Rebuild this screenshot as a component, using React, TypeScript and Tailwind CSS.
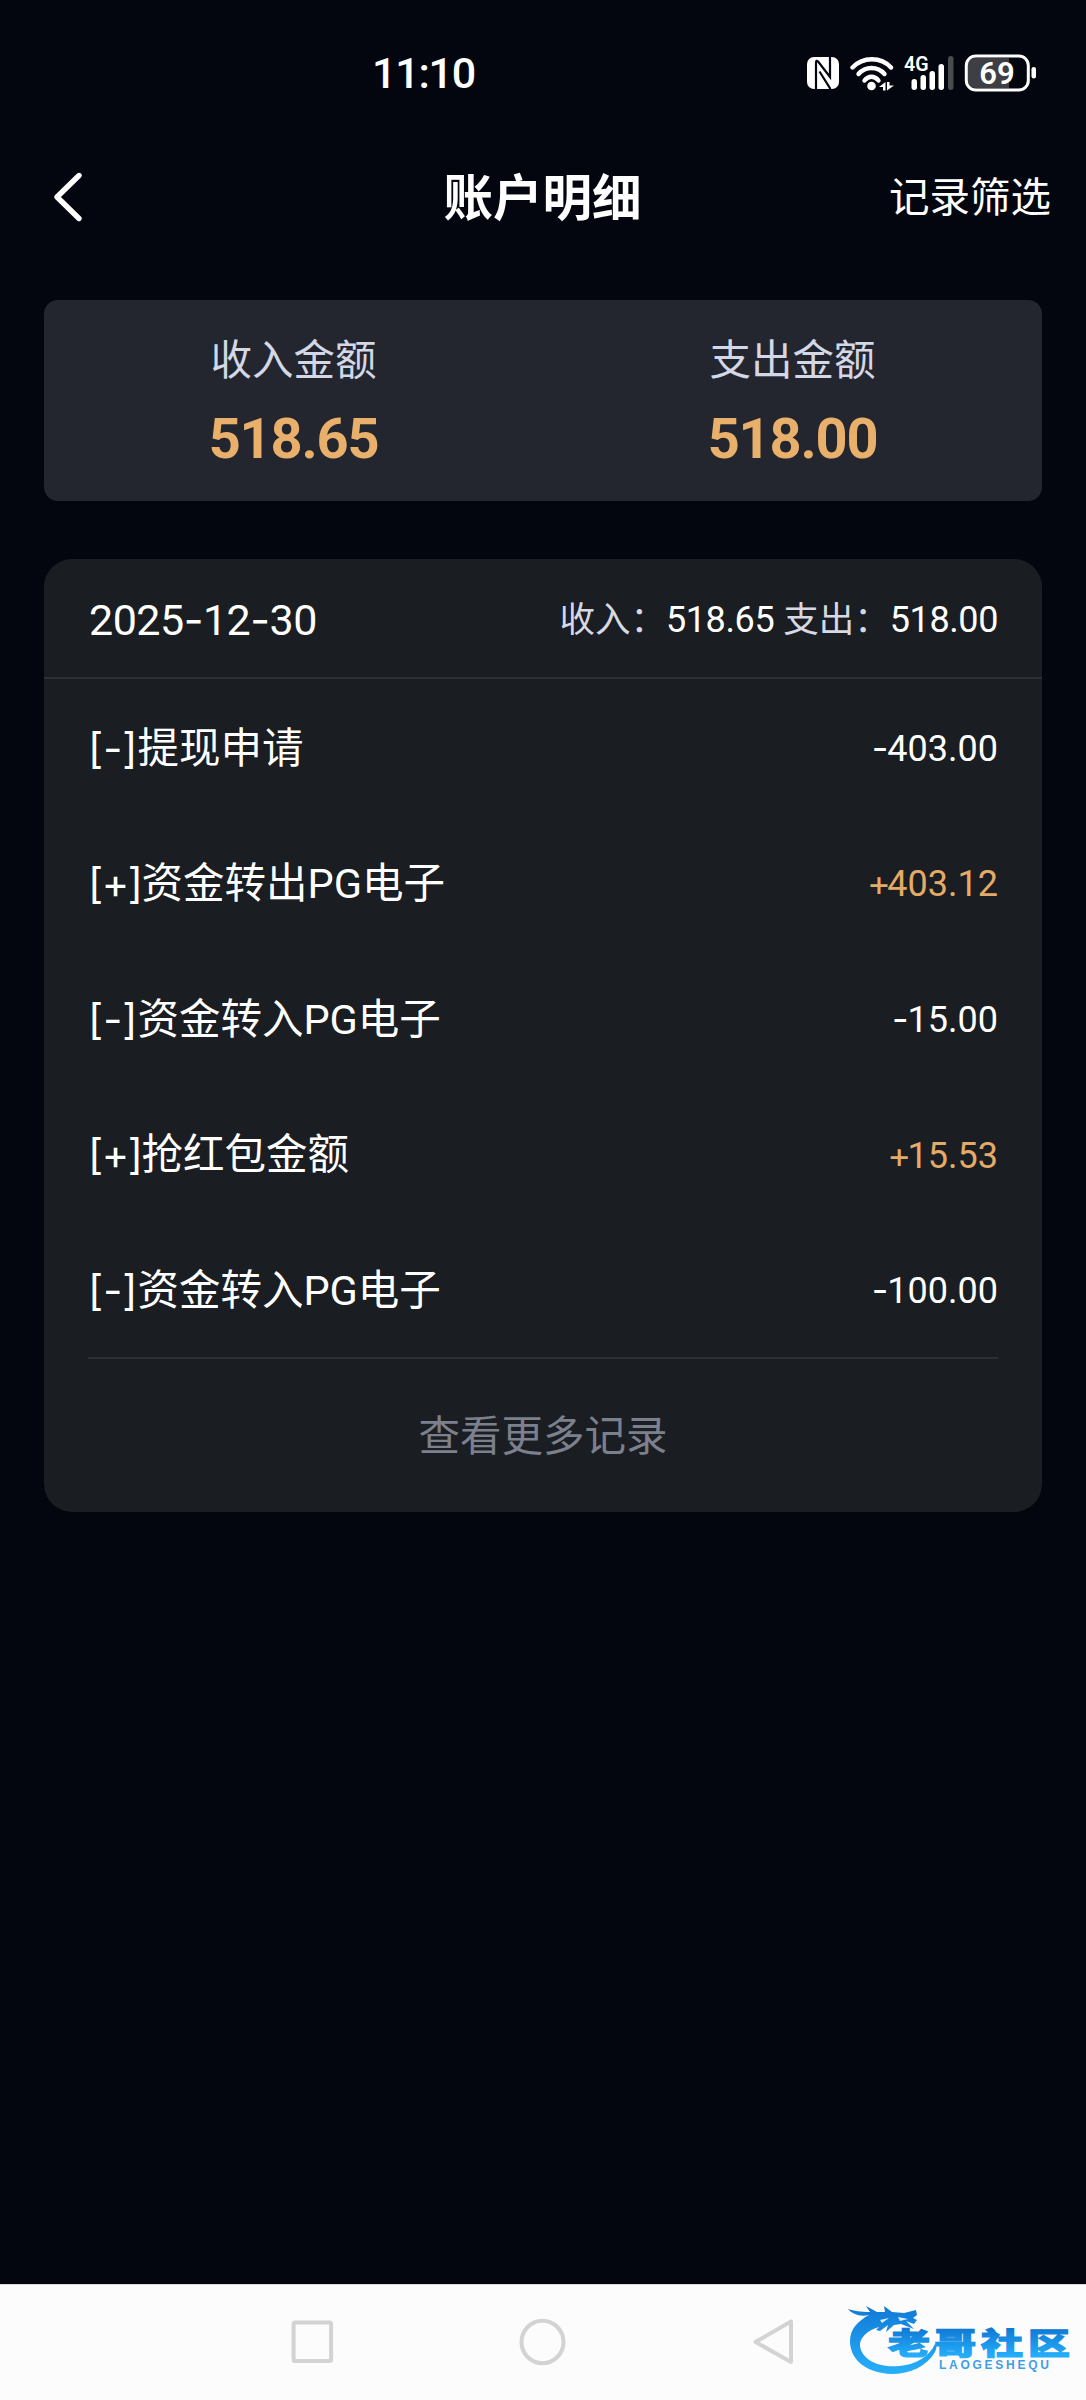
import React from "react";

interface RecordItem {
  sign: "-" | "+";
  title: string;
  amount: string;
}

const RECORDS: RecordItem[] = [
  { sign: "-", title: "提现申请", amount: "403.00" },
  { sign: "+", title: "资金转出PG电子", amount: "403.12" },
  { sign: "-", title: "资金转入PG电子", amount: "15.00" },
  { sign: "+", title: "抢红包金额", amount: "15.53" },
  { sign: "-", title: "资金转入PG电子", amount: "100.00" },
];

export default function App() {
  return (
    <div className="flex h-[2400px] w-[1086px] flex-col overflow-hidden bg-[#03060e] font-['Inter','Noto_Sans_CJK_SC',sans-serif] text-white">
      <StatusBar />

      <header className="grid h-[102px] grid-cols-3 items-center pr-[35px] pl-[52px]">
        <button className="justify-self-start">
          <svg width="32" height="52" viewBox="0 0 32 52" fill="none" stroke="#fff" strokeWidth="5.4" strokeLinecap="round" strokeLinejoin="round">
            <path d="M27 4.500 5 26l22 21.500" />
          </svg>
        </button>
        <h1 className="justify-self-center pt-[3px] pr-[18px] text-[49.5px] leading-none font-bold whitespace-nowrap">账户明细</h1>
        <button className="justify-self-end pt-[3px] text-[40.5px] leading-none">记录筛选</button>
      </header>

      <section className="mx-11 mt-[52px] grid h-[201px] shrink-0 grid-cols-2 rounded-[14px] bg-[#23262e]">
        <Total label="收入金额" value="518.65" />
        <Total label="支出金额" value="518.00" />
      </section>

      <section className="mx-11 mt-[58px] flex h-[953px] shrink-0 flex-col rounded-[28px] bg-[#1a1d21]">
        <div className="flex h-[120px] items-center justify-between border-b-2 border-[#2d3035] px-11 pt-[3px]">
          <DateText value="2025-12-30" />
          <div className="flex items-center text-[35.5px] leading-none text-[#d6d9e3]">
            <span>收入：</span>
            <span className="mr-[9px] font-['Roboto'] text-[36px] tracking-[-0.4px] text-white">518.65</span>
            <span>支出：</span>
            <span className="font-['Roboto'] text-[36px] tracking-[-0.4px] text-white">518.00</span>
          </div>
        </div>

        <div className="mx-11 flex h-[680px] flex-col border-b-2 border-[#2d3035]">
          {RECORDS.map((item, i) => (
            <Row key={i} item={item} />
          ))}
        </div>

        <button className="flex flex-1 items-center justify-center pt-[3px] text-[41.5px] leading-none text-[#7c808d]">查看更多记录</button>
      </section>

      <NavBar />
    </div>
  );
}

function Total({ label, value }: { label: string; value: string }) {
  return (
    <div className="flex flex-col items-center pt-[39px]">
      <div className="text-[41.5px] leading-[42px] text-[#d3d7e6]">{label}</div>
      <div className="mt-[30px] font-['Roboto'] text-[56px] leading-[56px] font-bold tracking-[-1.2px] text-[#e9b06c]">{value}</div>
    </div>
  );
}

function DateText({ value }: { value: string }) {
  const parts = value.split("-");
  return (
    <div className="pl-px font-['Roboto'] text-[43px] leading-none tracking-[-0.5px]">
      {parts.map((part, i) => (
        <span key={i}>
          {i > 0 && <span className="font-['Inter']">-</span>}
          {part}
        </span>
      ))}
    </div>
  );
}

function Row({ item }: { item: RecordItem }) {
  const isIncome = item.sign === "+";
  return (
    <div className="flex flex-1 items-center justify-between pt-[3px]">
      <div className="font-['Roboto','Noto_Sans_CJK_SC',sans-serif] text-[41.5px] leading-none">
        <span className={`font-['Inter'] ${isIncome ? "tracking-[-1.4px]" : ""}`}>[{item.sign}]</span>
        {item.title}
      </div>
      <div className={`font-['Roboto'] text-[36px] leading-none ${isIncome ? "text-[#e4ab68]" : "text-white"}`}>
        <span className={`font-['Inter'] ${isIncome ? "tracking-[-3.5px]" : "tracking-[-1px]"}`}>{item.sign}</span>
        {item.amount}
      </div>
    </div>
  );
}

function StatusBar() {
  return (
    <div className="flex h-[146px] shrink-0 items-center justify-between pr-[48px] pl-[372px]">
      <div className="font-['Roboto'] text-[43px] leading-none font-medium tracking-[-1.2px]">11:10</div>
      <div className="flex items-center">
        {/* NFC */}
        <svg width="32" height="32" viewBox="0 0 32 32" fill="none">
          <rect width="32" height="32" rx="7" fill="#fff" />
          <path d="M9 32V5.500Q9 2.500 11.500 5L23 20V0M23.500 32 12.500 14.500" stroke="#03060e" strokeWidth="2.200" />
        </svg>
        {/* Wi-Fi */}
        <svg className="ml-[11px]" width="44" height="35" viewBox="0 0 44 35" fill="none" stroke="#fff" strokeWidth="4.4" strokeLinecap="round">
          <path d="M2.500 11.500C13 .5 31 .5 41 11.500" />
          <path d="M8.500 18c7-8 19-8 26 0" />
          <path d="M14.500 24.500c4-5 10-5 14 0" />
          <circle cx="21.500" cy="30" r="4.300" fill="#fff" stroke="none" />
          <path d="M35.500 26v8.500H33V31h-4zM37 34.500V26h2.500v3.500H44z" fill="#fff" stroke="none" />
        </svg>
        {/* 4G signal */}
        <svg className="ml-[10px]" width="51" height="52" viewBox="0 -8 51 52">
          <text x="0" y="16" fill="#fff" fontFamily="Roboto" fontSize="21" fontWeight="600" textLength="24.500" lengthAdjust="spacingAndGlyphs">4G</text>
          <g fill="#fff">
            <rect x="7.500" y="24" width="5.500" height="11" rx="2.700" />
            <rect x="16.500" y="20" width="5.500" height="15" rx="2.700" />
            <rect x="25.500" y="16" width="5.500" height="19" rx="2.700" />
            <rect x="34.500" y="9" width="5.500" height="26" rx="2.700" />
          </g>
          <rect x="44" y="1" width="5.500" height="34" rx="2.700" fill="#494b51" />
        </svg>
        {/* battery */}
        <svg className="ml-[9px]" width="74" height="38" viewBox="0 0 74 38">
          <clipPath id="level">
            <rect width="45" height="38" />
          </clipPath>
          <rect x="4" y="4" width="58" height="30" rx="7" fill="#3d3f45" clipPath="url(#level)" />
          <rect x="2.300" y="2" width="62" height="34" rx="9.500" fill="none" stroke="#fff" strokeWidth="3" />
          <rect x="67.500" y="13" width="4.500" height="11.500" rx="2.200" fill="#fff" />
          <text x="33" y="30" fill="#fff" fontFamily="Roboto" fontSize="31" fontWeight="600" textAnchor="middle">69</text>
        </svg>
      </div>
    </div>
  );
}

function NavBar() {
  return (
    <nav className="relative mt-auto flex h-[116px] shrink-0 items-center border-t border-[#d9dadd] bg-[#fcfcfc] pl-[290px]">
      <svg width="506" height="50" viewBox="0 0 506 50" fill="none" stroke="#d3d3d3" strokeWidth="4" strokeLinejoin="round">
        <rect x="3.600" y="4.500" width="37.500" height="38.500" rx="1.500" />
        <ellipse cx="252.500" cy="24" rx="21" ry="21.200" />
        <path d="M501 3.500v40.500L465.500 24z" />
      </svg>
      <Watermark />
    </nav>
  );
}

function Watermark() {
  return (
    <svg className="absolute top-[13px] left-[846px]" width="226" height="80" viewBox="0 0 226 80">
      <defs>
        <linearGradient id="blue" x1="0" y1="0" x2="0" y2="1">
          <stop offset="0" stopColor="#1079d6" />
          <stop offset="1" stopColor="#27b0fb" />
        </linearGradient>
        <linearGradient id="letters" gradientUnits="userSpaceOnUse" x1="0" y1="30" x2="0" y2="58">
          <stop offset="0" stopColor="#0f78d4" />
          <stop offset="1" stopColor="#24aefa" />
        </linearGradient>
      </defs>
      {/* dragon body */}
      <path
        d="M2 11c6 2 12 3 22 3l-4-6 11 6h8l-1-6 8 6 12 1 12-3 1 5-4 3 4 2-3 4-8-3 8 8-13-5-7 1-8 7 2-7-8 6-4-1 3-3C21 32 13 41 14 48c2 15 21 22 39 20 16-1 30-9 36-22 2 1 2 3 0 8-8 14-24 22-44 22C22 75 4 63 4 43c0-12 8-20 19-26C14 19 6 16 2 11z"
        fill="url(#blue)"
      />
      <path d="M52 19l10 2-8 2zM34 22l9-2-7 5z" fill="#d9f0ff" />
      <g fill="url(#letters)" transform="scale(1.400 1)" fontFamily="Noto Sans CJK SC" fontSize="30" fontWeight="900" stroke="url(#letters)" strokeWidth="1.200">
        <text x="30 63 96.500 130" y="56">老哥社区</text>
      </g>
      <text x="93" y="70.500" fill="#3f9fe4" fontFamily="Liberation Sans" fontSize="12" fontWeight="700" textLength="110">LAOGESHEQU</text>
    </svg>
  );
}
